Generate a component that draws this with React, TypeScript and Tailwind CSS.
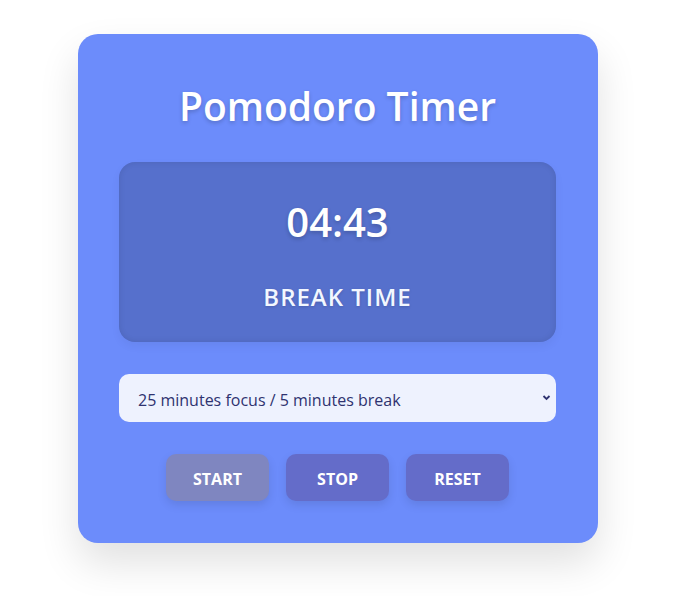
export default function App() {
  return (
    <div
      className="min-h-[596px] w-full bg-white flex pl-[78px] pt-[34px]"
      style={{ fontFamily: '"Open Sans", "Noto Sans", sans-serif' }}
    >
      <div className="w-[520px] h-[509px] rounded-[20px] bg-[#6c8cfb] shadow-[0_20px_40px_rgba(0,0,0,0.12)] pl-[41px] pr-[42px] pt-[42px] flex flex-col">
        <h1 className="text-center text-white text-[39px] leading-[60px] font-semibold [text-shadow:0_2px_4px_rgba(0,0,0,0.2)]">
          Pomodoro Timer
        </h1>
        <div className="mt-[26px] h-[180px] rounded-[16px] bg-[#5670cc] shadow-[inset_0_0_6px_rgba(0,0,0,0.1),0_4px_10px_rgba(0,0,0,0.05)] flex flex-col items-center">
          <div className="mt-[34px] text-white text-[40px] leading-[52px] font-semibold [text-shadow:0_2px_4px_rgba(0,0,0,0.2)]">
            04:43
          </div>
          <div className="mt-[33px] text-[#f2f7ff] text-[24px] leading-[32px] font-semibold tracking-[1px] [text-shadow:0_1px_3px_rgba(0,0,0,0.15)]">
            BREAK TIME
          </div>
        </div>
        <div className="mt-[32px] relative">
          <select
            defaultValue="25"
            className="w-full h-[48px] rounded-[10px] bg-[#eef2fe] text-[#2f3370] text-[16px] pl-[19px] pr-[30px] pt-[3px] appearance-none outline-none"
          >
            <option value="25">25 minutes focus / 5 minutes break</option>
            <option value="50">50 minutes focus / 10 minutes break</option>
          </select>
          <svg
            className="absolute right-[5px] top-[20px] pointer-events-none"
            width="9"
            height="7"
            viewBox="0 0 9 7"
          >
            <path d="M1.5 2 L4.5 5 L7.5 2" stroke="#2f3370" strokeWidth="1.8" fill="none" />
          </svg>
        </div>
        <div className="mt-[32px] flex justify-center gap-[17px]">
          <button className="w-[103px] h-[47px] rounded-[10px] bg-[#7f86c0] text-white font-bold text-[16px] pt-[2px] shadow-[0_4px_10px_rgba(0,0,0,0.1)]">
            START
          </button>
          <button className="w-[103px] h-[47px] rounded-[10px] bg-[#646cc9] text-white font-bold text-[16px] pt-[2px] shadow-[0_4px_10px_rgba(0,0,0,0.1)]">
            STOP
          </button>
          <button className="w-[103px] h-[47px] rounded-[10px] bg-[#646cc9] text-white font-bold text-[16px] pt-[2px] shadow-[0_4px_10px_rgba(0,0,0,0.1)]">
            RESET
          </button>
        </div>
      </div>
    </div>
  );
}
